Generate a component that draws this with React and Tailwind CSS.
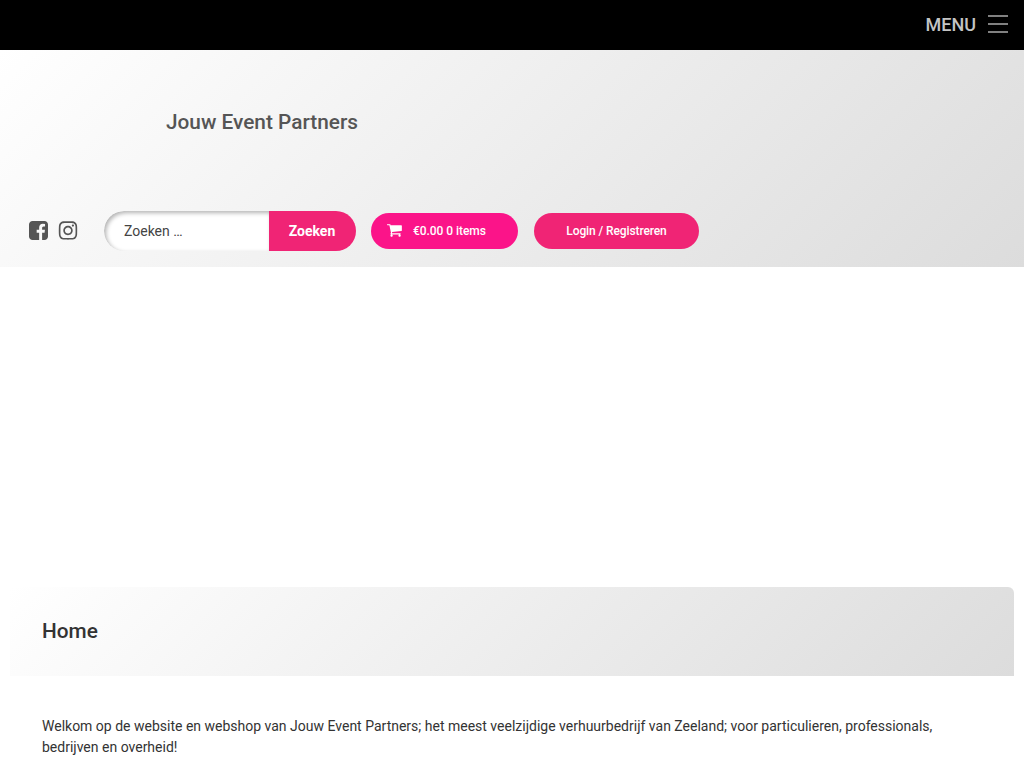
import React from "react";
import { FaInstagram } from "react-icons/fa";

const CartIcon = () => (
  <svg viewBox="0 0 1792 1792" className="h-[16px] w-[16px] fill-white">
    <path d="M640 1408q0 52-38 90t-90 38-90-38-38-90 38-90 90-38 90 38 38 90zm896 0q0 52-38 90t-90 38-90-38-38-90 38-90 90-38 90 38 38 90zm128-1088v512q0 24-16.5 42.5t-40.5 21.5l-1044 122q13 60 13 70 0 16-24 64h920q26 0 45 19t19 45-19 45-45 19h-1024q-26 0-45-19t-19-45q0-11 8-31.5t16-36 21.5-40 15.5-29.5l-177-823h-204q-26 0-45-19t-19-45 19-45 45-19h256q16 0 28.5 6.5t19.5 15.5 13 24.5 8 26 5.5 29.5 4.5 26h1201q26 0 45 19t19 45z" />
  </svg>
);

const FacebookIcon = () => (
  <svg viewBox="128 128 1536 1536" className="mb-[2px] h-[19px] w-[19px] fill-[#555]">
    <path d="M1376 128q119 0 203.5 84.5t84.5 203.5v960q0 119-84.5 203.5t-203.5 84.5h-188v-595h199l30-232h-229v-148q0-56 23.5-84t91.5-28l122-1v-207q-63-9-178-9-136 0-217.5 80t-81.5 226v171h-200v232h200v595h-532q-119 0-203.5-84.5t-84.5-203.5v-960q0-119 84.5-203.5t203.5-84.5h960z" />
  </svg>
);

export default function App() {
  return (
    <div className="h-screen overflow-hidden bg-white font-['Roboto',sans-serif] text-[#333]">
      {/* Top bar */}
      <div className="flex h-[50px] items-center justify-end bg-black pr-[16px]">
        <span className="text-[18px] font-medium leading-[50px] text-[#c4c4c4]">MENU</span>
        <div className="ml-[12px] flex w-[20px] flex-col gap-[6px] pb-[2px]">
          <span className="h-[2px] bg-[#808080]"></span>
          <span className="h-[2px] bg-[#808080]"></span>
          <span className="h-[2px] bg-[#808080]"></span>
        </div>
      </div>

      {/* Header */}
      <div className="flex h-[217px] flex-col bg-[linear-gradient(135deg,#ffffff_0%,#dcdcdc_100%)]">
        <div className="h-[161px] pl-[166px] pt-[57px] text-[20.8px] font-medium leading-[30px] text-[#555]">
          Jouw Event Partners
        </div>
        <div className="flex items-center pl-[29px]">
          <FacebookIcon />
          <FaInstagram className="ml-[10px] mb-[1px] h-[21px] w-[20px] text-[#555]" />
          <div className="ml-[26px] flex h-[40px] w-[252px] overflow-hidden rounded-[20px]">
            <div className="flex flex-1 items-center rounded-l-[20px] bg-white pl-[20px] text-[14px] text-[#444] shadow-[inset_2px_2px_4px_rgba(0,0,0,0.3)]">
              Zoeken …
            </div>
            <div className="flex w-[87px] items-center justify-center bg-[#f02475] pr-[1px] text-[14px] font-bold text-white">
              Zoeken
            </div>
          </div>
          <div className="ml-[15px] flex h-[36px] w-[147px] items-center rounded-[18px] bg-[#fb1489] pl-[16px] text-[12px] font-medium text-white">
            <CartIcon />
            <span className="ml-[10px] tracking-[-0.05px]">€0.00 0 items</span>
          </div>
          <div className="ml-[16px] flex h-[36px] w-[165px] items-center justify-center rounded-[18px] bg-[#f02475] text-[12px] font-medium tracking-[-0.1px] text-white">
            Login / Registreren
          </div>
        </div>
      </div>

      {/* Page title */}
      <div className="mt-[320px] mr-[10px] ml-[10px] flex h-[89px] items-center rounded-tr-[6px] bg-[linear-gradient(135deg,#ffffff_0%,#dcdcdc_100%)] pl-[32px] text-[20.8px] font-medium text-[#333]">
        Home
      </div>

      {/* Content */}
      <p className="mt-[40px] px-[42px] text-[14px] leading-[21px] text-[#333]">
        Welkom op de website en webshop van Jouw Event Partners; het meest veelzijdige verhuurbedrijf van Zeeland; voor particulieren, professionals, bedrijven en overheid!
      </p>
    </div>
  );
}
